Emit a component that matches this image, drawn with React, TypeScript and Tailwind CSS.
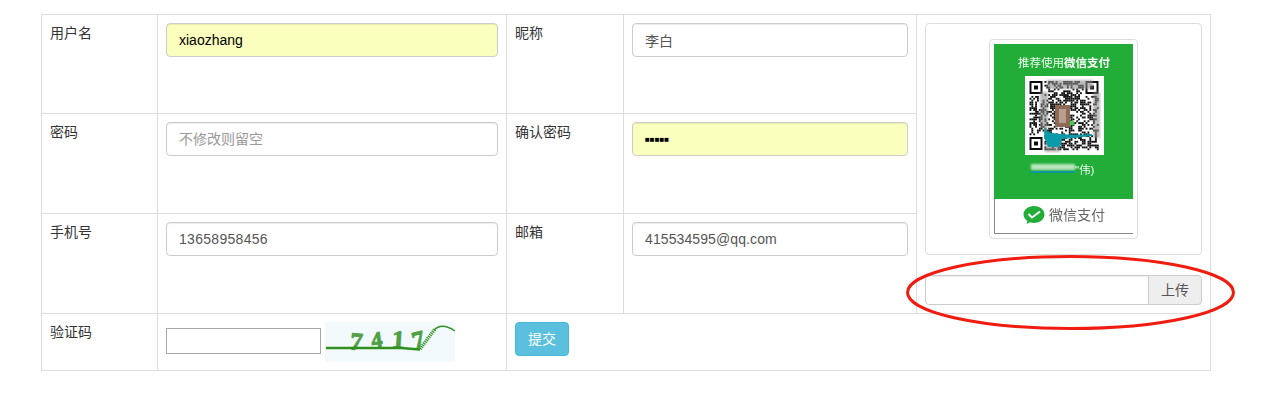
import React from 'react';

const FONT = '"Liberation Sans", "Noto Sans CJK SC", sans-serif';
const SERIF = '"Liberation Serif", serif';

// small seeded generator so the qr pattern stays the same on every load
const makeModules = () => {
  const cells: { x: number; y: number }[] = [];
  let seed = 41;
  for (let y = 0; y < 37; y++) {
    for (let x = 0; x < 37; x++) {
      seed = (seed * 1103515245 + 12345) % 2147483648;
      const inFinder = (x < 8 && y < 8) || (x > 28 && y < 8) || (x < 8 && y > 28);
      if (!inFinder && (seed >> 8) % 100 > 50) cells.push({ x, y });
    }
  }
  return cells;
};

const modules = makeModules();

const Finder = ({ x, y }: { x: number; y: number }) => (
  <g>
    <rect x={x + 1} y={y + 1} width="11" height="11" fill="none" stroke="#111" strokeWidth="2" />
    <rect x={x + 4.5} y={y + 4.5} width="4" height="4" fill="#111" />
  </g>
);

const PayCard = () => (
  <svg viewBox="0 0 139 190" className="block w-[139px] h-[190px]">
    <defs>
      <filter id="smudge" x="-10%" y="-10%" width="120%" height="120%">
        <feGaussianBlur stdDeviation="0.55" />
      </filter>
      <filter id="smudge-heavy" x="-20%" y="-20%" width="140%" height="140%">
        <feGaussianBlur stdDeviation="1.3" />
      </filter>
    </defs>
    <rect width="139" height="190" fill="#fff" />
    <rect width="139" height="155" fill="#22ac38" />
    <g filter="url(#smudge)">
      <text x="24" y="23" fontSize="11.5" fill="#eefaef" fontFamily={FONT}>
        推荐使用<tspan fontWeight="700" fill="#fff">微信支付</tspan>
      </text>
    </g>

    <rect x="31" y="32" width="79" height="79" fill="#fff" />
    <g transform="translate(35.500 37)" filter="url(#smudge)">
      {modules.map((m) => (
        <rect key={`${m.x}-${m.y}`} x={m.x * 1.87} y={m.y * 1.87} width="1.87" height="1.87" fill="#111" />
      ))}
      <Finder x={0} y={0} />
      <Finder x={56} y={0} />
      <Finder x={0} y={56} />
    </g>

    {/* smudged middle of the code */}
    <g fill="#8c8c8c" opacity="0.6" filter="url(#smudge-heavy)">
      <rect x="53" y="36" width="46" height="9" />
      <rect x="99" y="48" width="7" height="46" />
      <rect x="46" y="48" width="8" height="36" />
      <rect x="51" y="98" width="15" height="10" />
    </g>
    <g filter="url(#smudge)">
      <rect x="61" y="61" width="15" height="22" fill="#8d6a58" />
      <rect x="65" y="65" width="7" height="14" fill="#b99e8e" />
      <rect x="76" y="77" width="4" height="4" fill="#3fd03f" />
      <path d="M51 83 L54 88 Q72 92 98 90 L98 92 Q80 94 68 95 L66 103 L54 103 L50 93 Z" fill="#0a9aa8" />
    </g>

    <rect x="37" y="120" width="44" height="6" fill="#b9e6bf" filter="url(#smudge-heavy)" />
    <rect x="36" y="127" width="45" height="2" fill="#0f97a0" filter="url(#smudge)" />
    <g filter="url(#smudge)">
      <text x="81" y="130" fontSize="11.5" fill="#f0faf1" fontFamily={FONT}>"伟)</text>
    </g>

    <g filter="url(#smudge)">
      <path
        d="M40 162 C34 162 29.500 166 29.500 170.500 C29.500 173.300 31.300 175.600 33.500 177 L32.500 180 L36.200 178.200 C37.500 178.700 38.700 178.900 40 178.900 C46 178.900 50.500 175.200 50.500 170.500 C50.500 166 46 162 40 162 Z"
        fill="#22ac38"
      />
      <path d="M34.500 170 L38 173.500 L46 167.500" fill="none" stroke="#fff" strokeWidth="2" />
      <text x="55" y="176" fontSize="14" fill="#666" fontFamily={FONT}>微信支付</text>
    </g>
    <path d="M0.500 155 V189.500 H139" fill="none" stroke="#888" strokeWidth="1" />
  </svg>
);

const Captcha = () => (
  <svg viewBox="0 0 130 40" className="block w-[130px] h-[40px] shrink-0">
    <rect width="130" height="40" fill="#f2fafd" />
    <g fill="#4f9f45" stroke="#4f9f45" strokeWidth="0.9" fontFamily={SERIF} fontWeight="700" fontSize="25">
      <text x="25" y="28" transform="rotate(6 31 20)">7</text>
      <text x="46" y="25" fontSize="22" transform="rotate(-8 52 17)">4</text>
      <text x="67" y="26" transform="rotate(4 73 18)">1</text>
      <text x="87" y="26" transform="rotate(-14 94 18)">7</text>
    </g>
    <path d="M1 26 H76 L95 27.500" fill="none" stroke="#2f8f1f" strokeWidth="2.500" />
    <path d="M95 27 L110 7" stroke="#3c9a30" strokeWidth="3.500" strokeDasharray="1.300 0.800" />
    <path d="M109 8 Q117 0 130 9" fill="none" stroke="#2f8f1f" strokeWidth="1.400" />
  </svg>
);

const fieldClass =
  'block w-full h-[34px] px-3 rounded-[4px] border border-[#ccc] text-[14px] outline-none shadow-[inset_0_1px_1px_rgba(0,0,0,0.075)] placeholder:text-[#999]';
const cellClass = 'p-2 align-top border border-[#ddd] text-[14px] leading-[20px] text-[#333]';

export default function App() {
  return (
    <div className="relative h-[400px] pt-[14px] pl-[41px] bg-white overflow-hidden" style={{ fontFamily: FONT }}>
      <table className="table-fixed w-[1169px] border-collapse">
        <colgroup>
          <col className="w-[116px]" />
          <col className="w-[349px]" />
          <col className="w-[117px]" />
          <col className="w-[293px]" />
          <col className="w-[294px]" />
        </colgroup>
        <tbody>
          <tr>
            <td className={`${cellClass} h-[99px]`}>用户名</td>
            <td className={cellClass}>
              <input className={`${fieldClass} bg-[#faffbd] text-black`} defaultValue="xiaozhang" />
            </td>
            <td className={cellClass}>昵称</td>
            <td className={cellClass}>
              <input className={`${fieldClass} text-[#555]`} defaultValue="李白" />
            </td>
            <td rowSpan={3} className={cellClass}>
              <div className="h-[232px] flex items-center justify-center rounded-[4px] border border-[#ddd]">
                <div className="p-1 rounded-[4px] border border-[#ddd] bg-white">
                  <PayCard />
                </div>
              </div>
              <div className="flex h-[30px] mt-[20px]">
                <input className="flex-1 min-w-0 h-full rounded-l-[4px] border border-[#ccc] outline-none shadow-[inset_0_1px_1px_rgba(0,0,0,0.075)]" />
                <button className="w-[54px] h-full -ml-px rounded-r-[4px] border border-[#ccc] bg-[#eee] text-[14px] text-[#555]">
                  上传
                </button>
              </div>
            </td>
          </tr>
          <tr>
            <td className={`${cellClass} h-[100px]`}>密码</td>
            <td className={cellClass}>
              <input className={`${fieldClass} text-[#555]`} placeholder="不修改则留空" />
            </td>
            <td className={cellClass}>确认密码</td>
            <td className={cellClass}>
              <input
                type="text"
                className={`${fieldClass} bg-[#faffbd] text-black text-[8px]! [-webkit-text-security:square]`}
                defaultValue="12345"
              />
            </td>
          </tr>
          <tr>
            <td className={`${cellClass} h-[100px]`}>手机号</td>
            <td className={cellClass}>
              <input className={`${fieldClass} text-[#555] tracking-[0.3px]`} defaultValue="13658958456" />
            </td>
            <td className={cellClass}>邮箱</td>
            <td className={cellClass}>
              <input className={`${fieldClass} text-[#555] tracking-[0.1px]`} defaultValue="415534595@qq.com" />
            </td>
          </tr>
          <tr>
            <td className={cellClass}>验证码</td>
            <td className={cellClass}>
              <div className="flex items-center gap-1">
                <input className="w-[155px] h-[26px] mb-[2px] border border-[#a9a9a9] outline-none" />
                <Captcha />
              </div>
            </td>
            <td colSpan={3} className={cellClass}>
              <button className="w-[54px] h-[34px] rounded-[4px] border border-[#46b8da] bg-[#5bc0de] text-[14px] text-white">
                提交
              </button>
            </td>
          </tr>
        </tbody>
      </table>

      {/* hand drawn red mark over the upload field */}
      <svg className="absolute left-[900px] top-[250px] w-[340px] h-[85px] pointer-events-none" viewBox="0 0 340 85">
        <ellipse cx="170.500" cy="42.500" rx="163" ry="36" fill="none" stroke="#f01c10" strokeWidth="3" />
      </svg>
    </div>
  );
}
